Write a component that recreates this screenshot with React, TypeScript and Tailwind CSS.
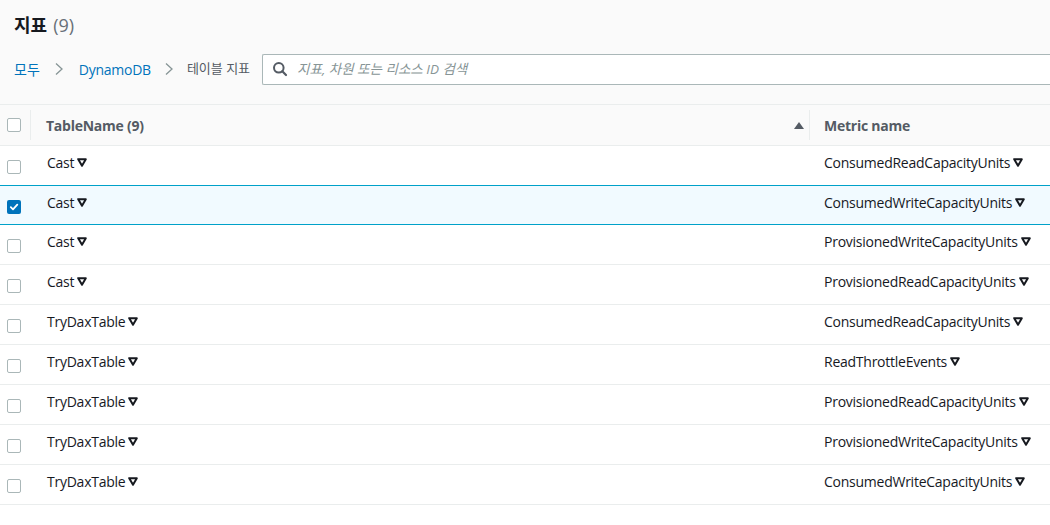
import React from "react";

const rows: [string, string, boolean][] = [
  ["Cast", "ConsumedReadCapacityUnits", false],
  ["Cast", "ConsumedWriteCapacityUnits", true],
  ["Cast", "ProvisionedWriteCapacityUnits", false],
  ["Cast", "ProvisionedReadCapacityUnits", false],
  ["TryDaxTable", "ConsumedReadCapacityUnits", false],
  ["TryDaxTable", "ReadThrottleEvents", false],
  ["TryDaxTable", "ProvisionedReadCapacityUnits", false],
  ["TryDaxTable", "ProvisionedWriteCapacityUnits", false],
  ["TryDaxTable", "ConsumedWriteCapacityUnits", false],
];

function Tri() {
  return (
    <svg width="10" height="9" viewBox="0 0 10 9" className="ml-[3px] inline-block">
      <polygon points="1.2,1.2 8.8,1.2 5,7.8" fill="none" stroke="#16191f" strokeWidth="2" strokeLinejoin="round" />
    </svg>
  );
}

function Check({ checked }: { checked: boolean }) {
  if (checked) {
    return (
      <div className="w-[14px] h-[14px] rounded-[2px] bg-[#0073bb] flex items-center justify-center">
        <svg width="10" height="10" viewBox="0 0 10 10">
          <path d="M1.8 5.2 L4 7.3 L8.3 2.6" fill="none" stroke="white" strokeWidth="1.8" strokeLinecap="round" strokeLinejoin="round" />
        </svg>
      </div>
    );
  }
  return <div className="w-[14px] h-[14px] rounded-[2px] border border-[#aab7b8] bg-white" />;
}

export default function App() {
  return (
    <div
      className="w-[1050px] h-[525px] overflow-hidden bg-[#fafafa] text-[14px] text-[#16191f] tracking-[-0.25px]"
      style={{ fontFamily: '"Open Sans", "Noto Sans CJK KR", sans-serif' }}
    >
      <div className="pl-[14px] pt-[14px] flex items-center tracking-normal">
        <span className="text-[18px] font-bold leading-[22px]">지표</span>
        <span className="text-[18px] text-[#687078] leading-[22px] ml-[6px]">(9)</span>
      </div>
      <div className="flex items-center h-[32px] mt-[17px] pl-[14px]">
        <span className="text-[#0073bb] tracking-normal">모두</span>
        <svg width="10" height="14" viewBox="0 0 10 14" className="ml-[14px] mr-[15px]">
          <path d="M2 1.5 L8 7 L2 12.5" fill="none" stroke="#879596" strokeWidth="1.3" />
        </svg>
        <span className="text-[#0073bb]">DynamoDB</span>
        <svg width="10" height="14" viewBox="0 0 10 14" className="ml-[13px] mr-[13px]">
          <path d="M2 1.5 L8 7 L2 12.5" fill="none" stroke="#879596" strokeWidth="1.3" />
        </svg>
        <span className="text-[#545b64] text-[13px] tracking-normal">테이블 지표</span>
        <div className="ml-[12px] flex-1 h-[31px] border border-r-0 border-[#aab7b8] rounded-l-[2px] bg-white flex items-center pl-[9px]">
          <svg width="16" height="16" viewBox="0 0 16 16">
            <circle cx="6.8" cy="6.8" r="4.8" fill="none" stroke="#545b64" strokeWidth="2" />
            <path d="M10.3 10.3 L14 14" stroke="#545b64" strokeWidth="2.2" strokeLinecap="round" />
          </svg>
          <span className="ml-[9px] italic text-[#879596] text-[13.5px] tracking-normal">지표, 차원 또는 리소스 ID 검색</span>
        </div>
      </div>
      <div className="mt-[19px] border-t border-[#eaeded]">
        <div className="flex h-[41px] items-center bg-[#fafafa] border-b border-[#eaeded]">
          <div className="w-[30px] h-full flex items-center pl-[7px]">
            <Check checked={false} />
          </div>
          <div className="w-px h-[30px] bg-[#eaeded]" />
          <div className="flex-1 flex items-center justify-between pl-[15px] pr-[4px] font-bold text-[#545b64]">
            <span>TableName (9)</span>
            <svg width="12" height="10" viewBox="0 0 12 10">
              <polygon points="1,9 11,9 6,2" fill="#545b64" />
            </svg>
          </div>
          <div className="w-px h-[30px] bg-[#eaeded]" />
          <div className="w-[240px] pl-[14px] font-bold text-[#545b64]">Metric name</div>
        </div>
        {rows.map(([t, m, sel], i) => (
          <div
            key={i}
            className={
              "flex h-[40px] items-center " +
              (sel
                ? "bg-[#f1faff] border-t border-b border-[#00a1c9] -mt-px"
                : "bg-white border-b border-[#eaeded]")
            }
          >
            <div className="w-[30px] flex items-center pl-[7px] pt-[3px]">
              <Check checked={sel} />
            </div>
            <div className="w-px" />
            <div className="flex-1 pl-[16px] pb-[6px] flex items-center">
              <span>{t}</span>
              <Tri />
            </div>
            <div className="w-px" />
            <div className="w-[240px] pl-[14px] pb-[6px] flex items-center whitespace-nowrap">
              <span>{m}</span>
              <Tri />
            </div>
          </div>
        ))}
        <div className="bg-white h-[40px]" />
      </div>
    </div>
  );
}
